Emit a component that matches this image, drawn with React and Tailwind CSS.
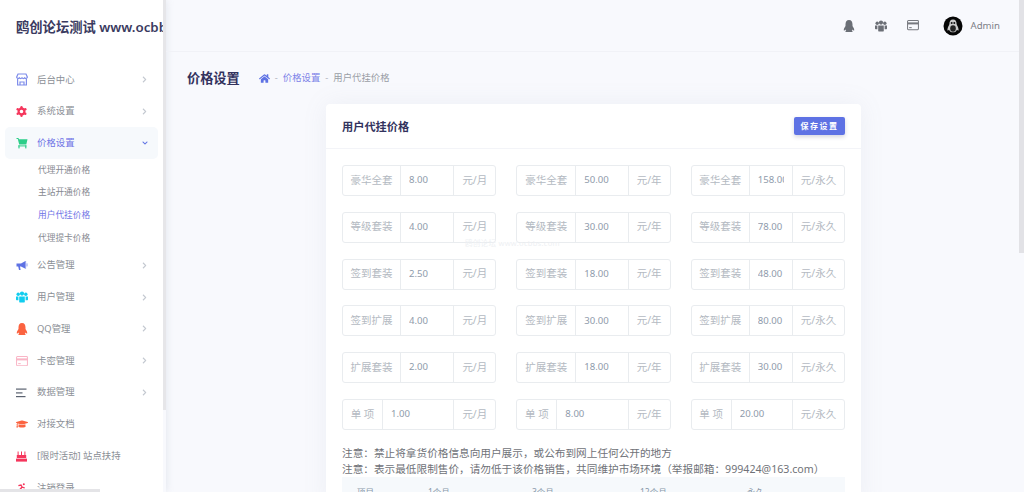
import { FaHome, FaGraduationCap, FaChevronRight, FaChevronDown } from "react-icons/fa";

const StoreIcon = () => (
  <svg width="12" height="13" viewBox="0 0 12 13" fill="none" stroke="#7f8dea" strokeWidth="1.2">
    <path d="M2 1h8l1.4 3.2a1.5 1.5 0 0 1-2.7.6 1.6 1.6 0 0 1-2.7 0 1.6 1.6 0 0 1-2.7 0A1.5 1.5 0 0 1 .6 4.2z" />
    <path d="M1.6 6v6h8.8V6M4 12V9h4v3" />
  </svg>
);

const CogIcon = () => (
  <svg width="11" height="11" viewBox="0 0 11 11">
    <circle cx="5.5" cy="5.5" r="2.9" fill="none" stroke="#f5365c" strokeWidth="2.2" />
    <circle cx="5.5" cy="1.2" r="1.2" fill="#f5365c" />
    <circle cx="5.5" cy="9.8" r="1.2" fill="#f5365c" />
    <circle cx="1.7" cy="3.3" r="1.2" fill="#f5365c" />
    <circle cx="9.3" cy="3.3" r="1.2" fill="#f5365c" />
    <circle cx="1.7" cy="7.7" r="1.2" fill="#f5365c" />
    <circle cx="9.3" cy="7.7" r="1.2" fill="#f5365c" />
  </svg>
);

const CartIcon = () => (
  <svg width="12" height="12" viewBox="0 0 12 12" fill="#2dce89">
    <path d="M0.5 1h2l.4 1.2H11.5L10.3 7.4H3.2L1.8 2H.5z" />
    <rect x="2.4" y="8.4" width="8" height="1" />
    <rect x="2.4" y="8.4" width="1.2" height="3" />
    <rect x="9.2" y="8.4" width="1.2" height="3" />
  </svg>
);

const HornIcon = () => (
  <svg width="12" height="11" viewBox="0 0 12 11">
    <path d="M0.5 3.5h4.5L9 1.2v7.4L5 6.6H4L4.6 10H3L2.2 6.6H.5z" fill="#5e72e4" />
    <path d="M9.6 1v7.8M11 3.4v3" stroke="#8f9dee" strokeWidth="1" fill="none" />
  </svg>
);

const UsersIcon = ({ color, size = 12 }) => (
  <svg width={size} height={size} viewBox="0 0 12 12" fill={color}>
    <circle cx="2.2" cy="3.2" r="1.7" />
    <circle cx="9.8" cy="3.2" r="1.7" />
    <circle cx="6" cy="2.6" r="2.1" />
    <path d="M0 5.6h2.4v3.6H0.6A.6.6 0 0 1 0 8.6zM12 5.6H9.6v3.6h1.8a.6.6 0 0 0 .6-.6z" />
    <path d="M3.2 5.4h5.6v5a1.2 1.2 0 0 1-1.2 1.2H4.4a1.2 1.2 0 0 1-1.2-1.2z" />
  </svg>
);

const QqIcon = ({ color }) => (
  <svg width="12" height="12" viewBox="0 0 12 12" fill={color}>
    <path d="M6 0C3.5 0 2.5 2 2.5 4.5V6C1.5 7.5.5 9 .8 10.5c.7.3 1.2-.5 1.6-1 .2.8.6 1.3.9 1.5-.8.3-1.3.6-1 1h7.4c.3-.4-.2-.7-1-1 .3-.2.7-.7.9-1.5.4.5.9 1.3 1.6 1 .3-1.5-.7-3-1.7-4.5V4.5C9.5 2 8.5 0 6 0z" />
  </svg>
);

const CardIcon = ({ color, size = 12 }) => (
  <svg width={size} height={size * 0.85} viewBox="0 0 14 12" fill="none" stroke={color} strokeWidth="1.2">
    <rect x="0.6" y="0.6" width="12.8" height="10.8" rx="1" />
    <path d="M0.6 4h12.8" strokeWidth="2.4" />
    <path d="M2.5 9h3" />
  </svg>
);

const LinesIcon = () => (
  <svg width="11" height="10" viewBox="0 0 11 10" fill="#5b6270">
    <rect x="0" y="0.5" width="10.5" height="1.2" />
    <rect x="0" y="4.3" width="6.5" height="1.2" />
    <rect x="0" y="8" width="9.5" height="1.2" />
  </svg>
);

const CakeIcon = () => (
  <svg width="11" height="11" viewBox="0 0 11 11" fill="#f5365c">
    <rect x="1.6" y="0.5" width="1" height="3.5" />
    <rect x="5" y="0.5" width="1" height="3.5" />
    <rect x="8.4" y="0.5" width="1" height="3.5" />
    <rect x="0.8" y="4" width="9.4" height="3" />
    <rect x="0" y="7.6" width="11" height="3" />
  </svg>
);

const RunIcon = () => (
  <svg width="10" height="9" viewBox="0 0 10 9" fill="none" stroke="#f5365c" strokeWidth="1.3">
    <circle cx="7.8" cy="1.3" r="1" fill="#f5365c" stroke="none" />
    <path d="M2.4 2.6 5 2l1.2 2.2L8.8 5M6 4 4 6.4 1 8.5M5 6l1.6 2.5" />
  </svg>
);

const Avatar = () => (
  <svg width="20" height="20" viewBox="0 0 20 20">
    <circle cx="10" cy="10" r="9.5" fill="#060606" />
    <path d="M10 3.5c-2.6 0-3.6 2-3.6 4.4 0 .8-2 3.4-2 6 0 1 1 .6 1.6-.2.6 1.6 2 2.6 4 2.6s3.4-1 4-2.6c.6.8 1.6 1.2 1.6.2 0-2.6-2-5.2-2-6C13.6 5.5 12.6 3.5 10 3.5z" fill="#c9c9c9" />
    <ellipse cx="10" cy="12.5" rx="2.8" ry="3.2" fill="#222" />
    <circle cx="8.7" cy="7" r="1" fill="#111" />
    <circle cx="11.3" cy="7" r="1" fill="#111" />
  </svg>
);

const menu = [
  { name: "后台中心", icon: <StoreIcon />, arrow: true },
  { name: "系统设置", icon: <CogIcon />, arrow: true },
  { name: "价格设置", icon: <CartIcon />, open: true },
  { name: "公告管理", icon: <HornIcon />, arrow: true },
  { name: "用户管理", icon: <UsersIcon color="#11cdef" />, arrow: true },
  { name: "QQ管理", icon: <QqIcon color="#fb6340" />, arrow: true },
  { name: "卡密管理", icon: <CardIcon color="#f9b5c6" />, arrow: true },
  { name: "数据管理", icon: <LinesIcon />, arrow: true },
  { name: "对接文档", icon: <FaGraduationCap size={12} color="#fb6340" /> },
  { name: "[限时活动] 站点扶持", icon: <CakeIcon /> },
  { name: "注销登录", icon: <RunIcon /> },
];

const subMenu = ["代理开通价格", "主站开通价格", "用户代挂价格", "代理提卡价格"];

const prices = [
  ["豪华全套", "8.00", "50.00", "158.00"],
  ["等级套装", "4.00", "30.00", "78.00"],
  ["签到套装", "2.50", "18.00", "48.00"],
  ["签到扩展", "4.00", "30.00", "80.00"],
  ["扩展套装", "2.00", "18.00", "30.00"],
  ["单 项", "1.00", "8.00", "20.00"],
];

const PriceInput = ({ label, value, unit, col }) => {
  const single = label === "单 项";
  const unitW = col === 2 ? "w-[52px]" : "w-[42px]";
  const labelW = single ? "w-[40px]" : col === 1 ? "w-[59px]" : "w-[58px]";
  return (
    <div className="flex h-[31px] rounded-[3px] border border-[#e9ecef] bg-white text-[10.5px]">
      <div className={`${labelW} flex shrink-0 items-center justify-center border-r border-[#e9ecef] whitespace-nowrap text-[#b4bac2]`}>
        {label}
      </div>
      <input
        readOnly
        value={value}
        className="w-0 min-w-0 flex-1 bg-transparent px-[8px] text-[9.6px] text-[#8f9bab] outline-none"
      />
      <div className={`${unitW} flex shrink-0 items-center justify-center border-l border-[#e9ecef] whitespace-nowrap text-[#b4bac2]`}>
        {unit}
      </div>
    </div>
  );
};

export default function App() {
  return (
    <div className="relative flex h-[492px] w-[1024px] overflow-hidden bg-[#f8f9fd] font-['Noto_Sans','Noto_Sans_CJK_SC',sans-serif]">
      {/* sidebar */}
      <div className="flex w-[166px] shrink-0 shadow-[0_0_8px_rgba(136,152,170,0.2)]">
        <div className="w-[163px] overflow-hidden bg-white">
          <div className="flex h-[63.7px] items-start overflow-hidden whitespace-nowrap pl-[16px] pt-[17px] text-[13.3px] leading-[20px] font-semibold text-[#3a3a60]">
            鸥创论坛测试 www.ocbbs.com
          </div>
          {menu.map((item) => (
            <div key={item.name}>
              <div
                className={`mx-[5px] flex h-[31.8px] items-center rounded-[5px] pl-[11px] text-[9.4px] ${
                  item.open ? "bg-[#f6f9fc] text-[#6f74e6]" : "text-[#8b8f96]"
                }`}
              >
                <span className="flex w-[21px] shrink-0 items-center">{item.icon}</span>
                <span className="flex-1 whitespace-nowrap">{item.name}</span>
                {item.arrow && <FaChevronRight size={7} color="#c3c8d0" className="mr-[10px]" />}
                {item.open && <FaChevronDown size={6} color="#5e72e4" className="mr-[10px]" />}
              </div>
              {item.open &&
                subMenu.map((sub) => (
                  <div
                    key={sub}
                    className={`flex h-[22.6px] items-center pl-[38px] text-[8.7px] ${
                      sub === "用户代挂价格" ? "text-[#6f74e6]" : "text-[#85888f]"
                    }`}
                  >
                    {sub}
                  </div>
                ))}
            </div>
          ))}
        </div>
        <div className="h-[410px] w-[3px] bg-[#e6e6e9]" />
      </div>

      {/* main */}
      <div className="min-w-0 flex-1 pr-[3px]">
        <div className="flex h-[52px] items-center justify-end border-b border-[#f1f2f7] pr-[21px]">
          <span className="mr-[20px]"><QqIcon color="#6b6f76" /></span>
          <span className="mr-[20px]"><UsersIcon color="#6b6f76" /></span>
          <span className="mr-[24px]"><CardIcon color="#77797f" /></span>
          <Avatar />
          <span className="ml-[8px] pt-[1px] text-[9.6px] text-[#7d8087]">Admin</span>
        </div>

        <div className="flex h-[52px] items-center pl-[21px] pt-[1px]">
          <h1 className="text-[13.2px] font-bold text-[#32325d]">价格设置</h1>
          <FaHome size={11} color="#5e72e4" className="ml-[19px]" />
          <span className="mx-[5px] text-[9.4px] text-[#b0b4bc]">-</span>
          <span className="text-[9.4px] text-[#7d83e8]">价格设置</span>
          <span className="mx-[5px] text-[9.4px] text-[#b0b4bc]">-</span>
          <span className="text-[9.4px] text-[#9a9ea6]">用户代挂价格</span>
        </div>

        <div className="mx-auto w-[535px] rounded-t-[4px] bg-white shadow-[0_0_24px_rgba(136,152,170,0.1)]">
          <div className="flex h-[45px] items-center justify-between border-b border-[#f3f4f8] px-[16px]">
            <h2 className="pt-[2px] text-[11.2px] font-bold text-[#32325d]">用户代挂价格</h2>
            <button className="flex h-[18px] w-[51px] items-center justify-center rounded-[2px] bg-[#5e72e4] text-[8px] font-bold tracking-[1.5px] text-white shadow-[0_2px_4px_rgba(50,50,93,0.2)]">
              保存设置
            </button>
          </div>
          <div className="px-[16px] pt-[16px]">
            <div className="grid grid-cols-3 gap-x-[20px] gap-y-[15.8px]">
              {prices.map((row) => (
                <div key={row[0]} className="contents">
                  <PriceInput label={row[0]} value={row[1]} unit="元/月" col={0} />
                  <PriceInput label={row[0]} value={row[2]} unit="元/年" col={1} />
                  <PriceInput label={row[0]} value={row[3]} unit="元/永久" col={2} />
                </div>
              ))}
            </div>
            <div className="mt-[15px] text-[10.65px] leading-[16px] whitespace-nowrap text-[#6f7278]">
              <p>{"注意\uFF1A禁止将拿货价格信息向用户展示\uFF0C或公布到网上任何公开的地方"}</p>
              <p>{"注意\uFF1A表示最低限制售价\uFF0C请勿低于该价格销售\uFF0C共同维护市场环境\uFF08举报邮箱\uFF1A999424@163.com\uFF09"}</p>
            </div>
            <div className="flex h-[30px] bg-[#f6f9fc] pt-[9px] text-[8.5px] text-[#8898aa]">
              <span className="ml-[15px] w-[71px]">项目</span>
              <span className="w-[104px]">1个月</span>
              <span className="w-[108px]">3个月</span>
              <span className="w-[107px]">12个月</span>
              <span>永久</span>
            </div>
          </div>
        </div>
      </div>

      {/* overlays: watermark and scrollbars */}
      <div className="absolute left-[465px] top-[238px] text-[7.5px] tracking-[0.3px] whitespace-nowrap text-[#eef0f3]">
        鸥创论坛 www.ocbbs.com
      </div>
      <div className="absolute right-0 top-0 h-[253px] w-[5px] bg-[#e2e2e6]" />
      <div className="absolute bottom-0 left-0 h-[3px] w-[100px] bg-[#e4e4e7]" />
    </div>
  );
}
